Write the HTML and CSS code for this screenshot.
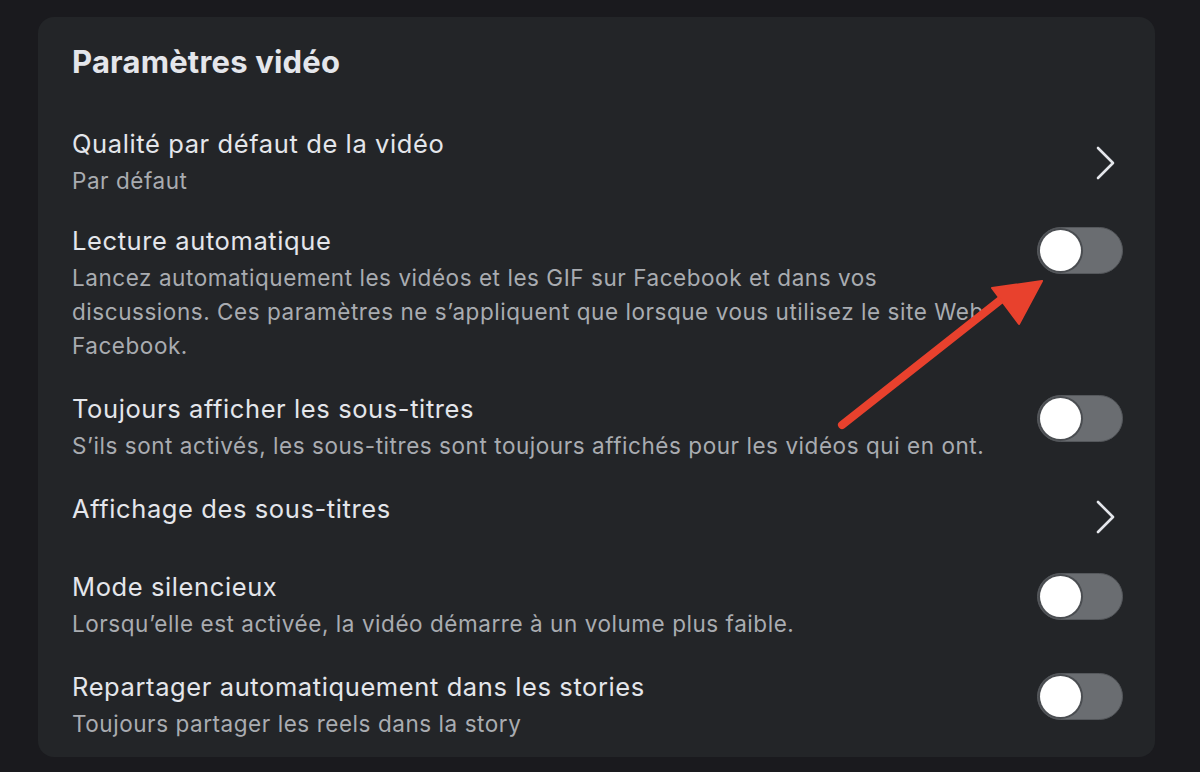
FILE: index.html
```html
<!DOCTYPE html>
<html lang="fr">
<head>
<meta charset="utf-8">
<title>Paramètres vidéo</title>
<link rel="stylesheet" href="styles.css">
</head>
<body>
<main class="page">
  <section class="card">
    <h1 class="card-title">Paramètres vidéo</h1>

    <div class="row row-first">
      <div class="row-text">
        <div class="row-title">Qualité par défaut de la vidéo</div>
        <div class="row-sub">Par défaut</div>
      </div>
      <svg class="chevron" viewBox="0 0 24 34" aria-hidden="true"><path d="M4 2 L19 17 L4 32"/></svg>
    </div>

    <div class="row">
      <div class="row-text">
        <div class="row-title">Lecture automatique</div>
        <div class="row-sub">Lancez automatiquement les vidéos et les GIF sur Facebook et dans vos discussions. Ces paramètres ne s’appliquent que lorsque vous utilisez le site Web Facebook.</div>
      </div>
      <span class="toggle"><span class="knob"></span></span>
    </div>

    <div class="row">
      <div class="row-text">
        <div class="row-title">Toujours afficher les sous-titres</div>
        <div class="row-sub">S’ils sont activés, les sous-titres sont toujours affichés pour les vidéos qui en ont.</div>
      </div>
      <span class="toggle"><span class="knob"></span></span>
    </div>

    <div class="row">
      <div class="row-text">
        <div class="row-title">Affichage des sous-titres</div>
      </div>
      <svg class="chevron" viewBox="0 0 24 34" aria-hidden="true"><path d="M4 2 L19 17 L4 32"/></svg>
    </div>

    <div class="row">
      <div class="row-text">
        <div class="row-title">Mode silencieux</div>
        <div class="row-sub">Lorsqu’elle est activée, la vidéo démarre à un volume plus faible.</div>
      </div>
      <span class="toggle"><span class="knob"></span></span>
    </div>

    <div class="row">
      <div class="row-text">
        <div class="row-title">Repartager automatiquement dans les stories</div>
        <div class="row-sub">Toujours partager les reels dans la story</div>
      </div>
      <span class="toggle"><span class="knob"></span></span>
    </div>
  </section>

  <svg class="annotation" viewBox="0 0 1200 772" aria-hidden="true">
    <line x1="842" y1="425" x2="1003" y2="298" class="arrow-line"/>
    <polygon points="1042,281 992,288 1019,324" class="arrow-head"/>
  </svg>
</main>
</body>
</html>
```

FILE: styles.css
```css
* { box-sizing: border-box; }

html, body {
  margin: 0;
  padding: 0;
  background: #1a1a1e;
}

.page {
  position: relative;
  width: 1200px;
  height: 772px;
  padding: 17px 45px 0 38px;
  font-family: Inter, "Noto Sans", "Liberation Sans", sans-serif;
}

.card {
  background: #232528;
  border-radius: 16px;
  padding: 28px 32px 1px 34px;
}

.card-title {
  margin: 0 0 34px;
  font-size: 31px;
  line-height: 34px;
  font-weight: 700;
  letter-spacing: 0.2px;
  color: #e4e6eb;
}

.row {
  display: flex;
  align-items: center;
  gap: 24px;
  min-height: 78px;
  padding: 15px 0;
}

.row-first {
  padding-bottom: 12px;
}

.row-text {
  flex: 1;
  min-width: 0;
  align-self: flex-start;
}

.row-title {
  font-size: 25.5px;
  line-height: 32px;
  letter-spacing: 0.6px;
  color: #e4e6eb;
}

.row-sub {
  margin-top: 4px;
  font-size: 22.5px;
  line-height: 34px;
  letter-spacing: 0.55px;
  color: #a9acb1;
}

.chevron {
  width: 24px;
  height: 34px;
  margin-right: 5px;
  fill: none;
  stroke: #e4e6eb;
  stroke-width: 2.6;
  stroke-linecap: round;
  stroke-linejoin: round;
}

.toggle {
  align-self: flex-start;
  margin-top: 2px;
  flex: none;
  width: 86px;
  height: 47px;
  border-radius: 24px;
  background: #6a6d71;
  border: 1px solid #55585c;
  display: flex;
  align-items: center;
  padding-left: 2px;
}

.knob {
  width: 41px;
  height: 41px;
  border-radius: 50%;
  background: #ffffff;
  box-shadow: 0 0 0 2px #4a4d51;
}

.annotation {
  position: absolute;
  left: 0;
  top: 0;
  width: 1200px;
  height: 772px;
  pointer-events: none;
}

.arrow-line {
  stroke: #e8412d;
  stroke-width: 8;
  stroke-linecap: round;
}

.arrow-head {
  fill: #e8412d;
  stroke: #e8412d;
  stroke-width: 2;
  stroke-linejoin: round;
}
```
